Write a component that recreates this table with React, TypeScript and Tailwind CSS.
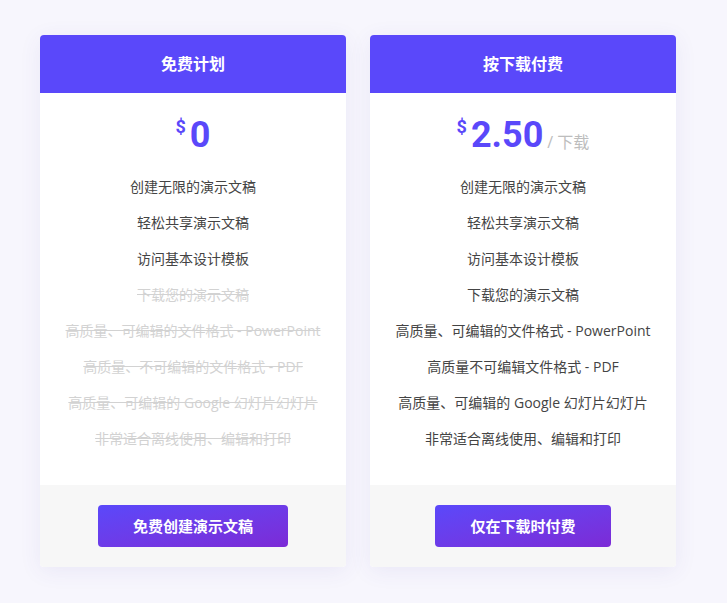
const font = { fontFamily: '"Open Sans", "Noto Sans CJK SC", sans-serif' }

interface Plan {
  title: string
  price: string
  unit?: string
  features: { text: string; off?: boolean }[]
  cta: string
}

const plans: Plan[] = [
  {
    title: '免费计划',
    price: '0',
    features: [
      { text: '创建无限的演示文稿' },
      { text: '轻松共享演示文稿' },
      { text: '访问基本设计模板' },
      { text: '下载您的演示文稿', off: true },
      { text: '高质量、可编辑的文件格式 - PowerPoint', off: true },
      { text: '高质量、不可编辑的文件格式 - PDF', off: true },
      { text: '高质量、可编辑的 Google 幻灯片幻灯片', off: true },
      { text: '非常适合离线使用、编辑和打印', off: true },
    ],
    cta: '免费创建演示文稿',
  },
  {
    title: '按下载付费',
    price: '2.50',
    unit: '/ 下载',
    features: [
      { text: '创建无限的演示文稿' },
      { text: '轻松共享演示文稿' },
      { text: '访问基本设计模板' },
      { text: '下载您的演示文稿' },
      { text: '高质量、可编辑的文件格式 - PowerPoint' },
      { text: '高质量不可编辑文件格式 - PDF' },
      { text: '高质量、可编辑的 Google 幻灯片幻灯片' },
      { text: '非常适合离线使用、编辑和打印' },
    ],
    cta: '仅在下载时付费',
  },
]

function PlanCard({ plan }: { plan: Plan }) {
  return (
    <div className="w-[306px] bg-white rounded-[4px] overflow-hidden shadow-[0_4px_22px_rgba(80,70,170,0.08)]">
      <div className="h-[58px] bg-[#5a48fa] flex items-center justify-center text-white text-base font-bold">
        {plan.title}
      </div>
      <div className="pt-[16px] pb-[28px]">
        <div className="h-[52px] flex items-center justify-center text-[#5a48fa]">
          <span className="text-[18px] font-bold self-start mt-[4px] mr-[4px]" style={{ fontFamily: 'Roboto, sans-serif' }}>
            $
          </span>
          <span className="text-[36px] font-bold leading-none" style={{ fontFamily: 'Roboto, sans-serif' }}>
            {plan.price}
          </span>
          {plan.unit && <span className="text-base text-[#bdbdbd] ml-[4px] mt-[14px]">{plan.unit}</span>}
        </div>
        <ul className="mt-[8px]">
          {plan.features.map((f) => (
            <li
              key={f.text}
              className={`h-[36px] flex items-center justify-center text-sm ${
                f.off ? 'text-[#d2d2d2] line-through' : 'text-[#444]'
              }`}
            >
              {f.text}
            </li>
          ))}
        </ul>
      </div>
      <div className="h-[82px] bg-[#f7f7f7] flex items-center justify-center">
        <button className="h-[42px] px-[35px] rounded-[4px] bg-linear-to-br from-[#5a48fa] to-[#7c2ad6] text-white text-[15px] font-bold">
          {plan.cta}
        </button>
      </div>
    </div>
  )
}

export default function App() {
  return (
    <div className="min-h-[603px] bg-[#f7f6fd] pl-[40px] pt-[35px] flex items-start gap-6" style={font}>
      {plans.map((p) => (
        <PlanCard key={p.title} plan={p} />
      ))}
    </div>
  )
}
